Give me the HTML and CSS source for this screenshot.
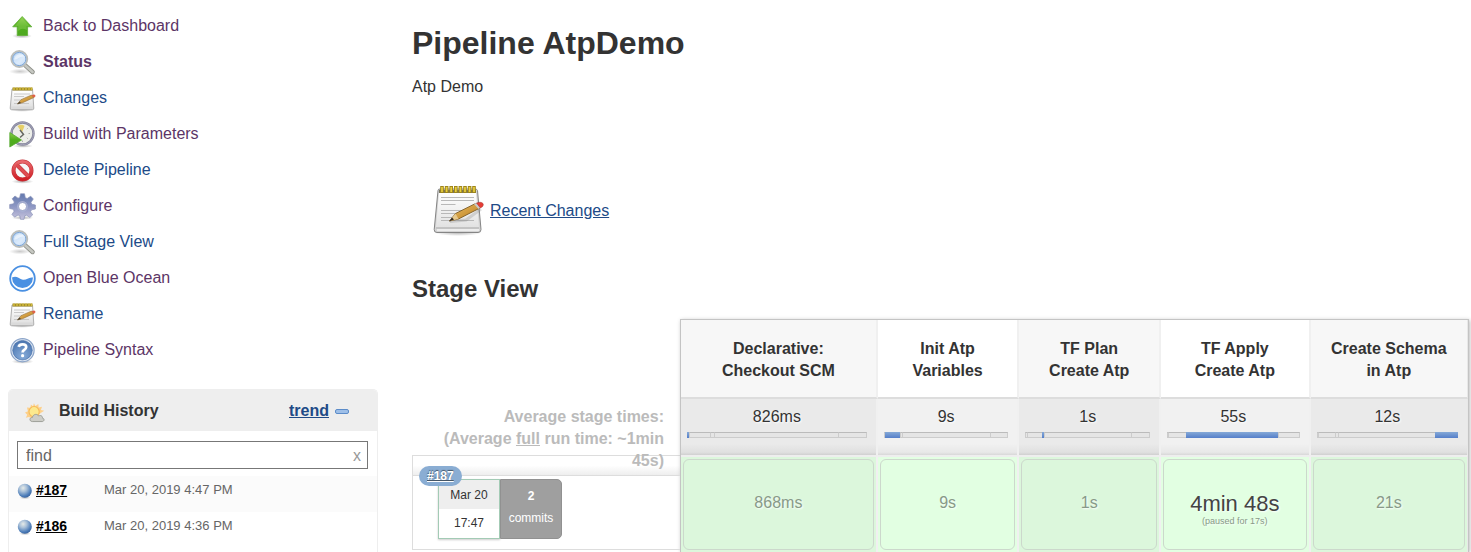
FILE: index.html
```html
<!DOCTYPE html>
<html lang="en">
<head>
<meta charset="utf-8">
<title>AtpDemo [Jenkins]</title>
<link rel="stylesheet" href="styles.css">
</head>
<body>
<svg class="defs" width="0" height="0" aria-hidden="true">
  <defs>
    <linearGradient id="green" x1="0" y1="0" x2="0" y2="1"><stop offset="0" stop-color="#8ccf4c"/><stop offset=".5" stop-color="#4fae1c"/><stop offset="1" stop-color="#4ea820"/></linearGradient>
    <linearGradient id="paper" x1="0" y1="0" x2="0" y2="1"><stop offset="0" stop-color="#ffffff"/><stop offset="1" stop-color="#e2e2e2"/></linearGradient>
    <linearGradient id="gearfill" x1="0" y1="0" x2="0" y2="1"><stop offset="0" stop-color="#6279ae"/><stop offset=".5" stop-color="#8e98c4"/><stop offset="1" stop-color="#c6c2dc"/></linearGradient>
    <linearGradient id="lens" x1="0" y1="0" x2="1" y2="1"><stop offset="0" stop-color="#b5d3f5"/><stop offset=".6" stop-color="#dcebfb"/><stop offset="1" stop-color="#b8d4f4"/></linearGradient>
    <linearGradient id="wood" x1="0" y1="0" x2="1" y2="1"><stop offset="0" stop-color="#ecc16a"/><stop offset="1" stop-color="#b87a18"/></linearGradient>
    <linearGradient id="red" x1="0" y1="0" x2="0" y2="1"><stop offset="0" stop-color="#e8686c"/><stop offset="1" stop-color="#cf1f26"/></linearGradient>
    <radialGradient id="ball" cx=".38" cy=".3" r=".75"><stop offset="0" stop-color="#e6ebe8"/><stop offset=".35" stop-color="#a9c0d8"/><stop offset=".75" stop-color="#4f7fba"/><stop offset="1" stop-color="#345e9a"/></radialGradient>
    <radialGradient id="helpfill" cx=".5" cy=".8" r=".8"><stop offset="0" stop-color="#86abd9"/><stop offset="1" stop-color="#4a74ae"/></radialGradient>
    <radialGradient id="shade"><stop offset="0" stop-color="#000" stop-opacity=".3"/><stop offset="1" stop-color="#000" stop-opacity="0"/></radialGradient>
  </defs>
  <symbol id="up" viewBox="0 0 27 27">
    <ellipse cx="13" cy="23" rx="10" ry="2.5" fill="url(#shade)"/>
    <path d="M13.2 3.5 22.8 13.8H18.6V22.5H8.2V13.8H3.7Z" fill="url(#green)" stroke="#5fae35" stroke-width=".8" stroke-linejoin="round"/>
    <path d="M13.2 5 20.6 13H17.7V17Q13 14 9.2 18V13H5.8Z" fill="#b4e27a" opacity=".3"/>
  </symbol>
  <symbol id="search" viewBox="0 0 27 27">
    <ellipse cx="11" cy="22.5" rx="11" ry="2.8" fill="url(#shade)" opacity=".7"/>
    <path d="m16 16.200 7.600 6.800" stroke="#8f918a" stroke-width="4.400" stroke-linecap="round"/>
    <path d="m16 16.200 7.600 6.800" stroke="#c6c8c2" stroke-width="2.600" stroke-linecap="round"/>
    <circle cx="10.300" cy="10" r="8" fill="url(#lens)" stroke="#bcbebb" stroke-width="1.800"/>
    <circle cx="10.300" cy="10" r="6.600" fill="none" stroke="#7ba4d4" stroke-width="1"/>
    <path d="M5.300 10.700C5.500 5.200 12.500 3.200 15.100 7.600 10.500 7.200 8.500 10.700 5.300 10.700Z" fill="#fff" opacity=".5"/>
  </symbol>
  <symbol id="notepad" viewBox="0 0 52 52">
    <ellipse cx="25" cy="48.5" rx="24" ry="3.5" fill="url(#shade)"/>
    <path d="M5 6.500Q5 5 7 5H42Q44 5 44.500 6.500L48 45.500Q48 48.500 45 48.500H4Q1 48.500 1.200 45.500Z" fill="#d4d4d4" stroke="#858585"/>
    <path d="M6 8H43L46 43H3Z" fill="url(#paper)"/>
    <path d="M3 44H46" stroke="#b2b2b2"/>
    <path d="M4 46H46" stroke="#ededed" stroke-width="2"/>
    <path d="M6 6H43V9H6Z" fill="#77745c"/>
    <path d="M9 2V9M13.600 2V9M18.200 2V9M22.800 2V9M27.400 2V9M32 2V9M36.600 2V9M41 2V9" stroke="#9f861a" stroke-width="3.600"/>
    <path d="M9 3V8M13.600 3V8M18.200 3V8M22.800 3V8M27.400 3V8M32 3V8M36.600 3V8M41 3V8" stroke="#e8ce3e" stroke-width="1.700"/>
    <path d="M8 13.500H41M8 16.500H41M8 20.500H22.500M8 26.500H32M8 29.500H28M8 33.500H20M8 36.500H41" stroke="#b8b8b8" stroke-width="1.200"/>
    <path d="M17 37.500 33 36 48 25" fill="none" stroke="#777" stroke-width="3" opacity=".25"/>
    <path d="M16.500 37 22.500 29.500 42.500 19.500 47 24 25.500 35Z" fill="url(#wood)" stroke="#70501c" stroke-width=".8"/>
    <path d="M16.500 37 22.500 29.500 25.500 35Z" fill="#e6c98d"/><path d="M16 37.500 19 33.500 21 35.500Z" fill="#332b22"/>
    <path d="m41 20 3-1.500 4.500 4.200L45.500 25Z" fill="#c9c9c9"/>
    <path d="M43.500 19 47 18.200Q52 19 49.500 22.600L47.500 24Z" fill="#e63d36" stroke="#a02822" stroke-width=".5"/>
  </symbol>
  <symbol id="notepad-small" viewBox="0 0 27 27">
    <ellipse cx="13" cy="25" rx="12" ry="1.800" fill="url(#shade)"/>
    <path d="M3 4H23.500L24.800 23Q25 24.700 23.500 24.700H2.500Q1 24.700 1.200 23Z" fill="#dadada" stroke="#a2a2a2" stroke-width=".8"/>
    <path d="M3.500 6H23L23.800 21.500H2.300Z" fill="url(#paper)"/>
    <path d="M3.500 2.500H23.500V5.500H3.500Z" fill="#a28d28"/>
    <path d="M5 2.500V5M8 2.500V5M11 2.500V5M14 2.500V5M17 2.500V5M20 2.500V5M22.500 2.500V5" stroke="#d4bd3c" stroke-width="1.400"/>
    <path d="M5 9H21M5 11.500H15M5 15H13M5 18.500H20" stroke="#c4c4c4" stroke-width=".9"/>
    <path d="M8.500 19 12 14.700 22.500 10 25 12.500 13.500 17.700Z" fill="url(#wood)" stroke="#94703c" stroke-width=".6"/>
    <path d="M8 19.200 10.500 16.500 12 18Z" fill="#4d463b"/>
    <path d="M22.500 10.200Q26.500 8.500 26.500 11.200L24.800 12.800Z" fill="#de6048"/>
  </symbol>
  <symbol id="clock" viewBox="0 0 27 27">
    <ellipse cx="14" cy="25" rx="10" ry="1.800" fill="url(#shade)"/>
    <circle cx="13.500" cy="12.500" r="11" fill="#eceee9" stroke="#85859c" stroke-width="2.400"/>
    <circle cx="13.500" cy="12.500" r="11.200" fill="none" stroke="#aaaabe" stroke-width=".8"/>
    <path d="M13 11.500 8.500 5Q13 2.500 15.500 5Z" fill="#e6cf68"/>
    <path d="M11 9 14.500 13.500 11 16.500" fill="none" stroke="#666863" stroke-width="1.500"/>
    <path d="M21 12.500H19.500M13.500 21V19.500M18.800 7.200 17.800 8.200M18.800 17.800 17.800 16.800" stroke="#b0b2ad"/>
    <path d="M.8 11.500 12.500 19 .8 26Z" fill="url(#green)" stroke="#55aa30" stroke-width=".8"/>
  </symbol>
  <symbol id="delete" viewBox="0 0 27 27">
    <ellipse cx="13.500" cy="24.500" rx="11" ry="2.200" fill="url(#shade)"/>
    <circle cx="13.500" cy="13.500" r="9" fill="#f7f7f7" stroke="#c4343a" stroke-width="4"/>
    <path d="m7.500 7.500 12 12" stroke="#c4343a" stroke-width="4"/>
    <circle cx="13.500" cy="13.500" r="9" fill="none" stroke="url(#red)" stroke-width="3"/>
    <path d="m7.500 7.500 12 12" stroke="#df4b50" stroke-width="3"/>
  </symbol>
  <symbol id="gear" viewBox="0 0 27 27">
    <ellipse cx="13.500" cy="24.800" rx="11" ry="2" fill="url(#shade)"/>
    <path fill-rule="evenodd" d="M11.500.8H15.500L16.300 4.700 18.200 5.500 21.700 3.200 24.300 6 22 9.300 22.700 11.200 26.400 12V16L22.500 16.800 21.500 18.700 23.700 21.800 20.800 24.500 17.500 22.200 15.700 22.900 15 26.300H11.500L10.700 22.700 9 22 5.600 24.200 3 21.500 5.100 18.200 4.300 16.300.7 15.500V11.500L4.500 10.800 5.300 9 3.200 5.700 6 3 9 5.200 10.700 4.500ZM13.500 9.500A4 4 0 1 0 13.500 17.500 4 4 0 1 0 13.500 9.500Z" fill="url(#gearfill)" stroke="#8a92b8" stroke-width=".7"/>
    <circle cx="13.500" cy="13.500" r="4.800" fill="none" stroke="#aab2d4" stroke-width="1.200"/>
  </symbol>
  <symbol id="ocean" viewBox="0 0 27 27">
    <circle cx="13.500" cy="13.500" r="12.300" fill="#fff" stroke="#4a90e2" stroke-width="1.800"/>
    <path d="M3 12.600C7 10.200 9.500 13 13 14.500 17 16.200 19.500 11.500 24 12.600A10.500 10.500 0 0 1 3 12.600Z" fill="#4a90e2"/>
  </symbol>
  <symbol id="help" viewBox="0 0 27 27">
    <ellipse cx="13.500" cy="24.500" rx="11" ry="2.300" fill="url(#shade)"/>
    <circle cx="13.500" cy="13.200" r="11.600" fill="#e6edf6" stroke="#8ca5c9" stroke-width="1.200"/>
    <circle cx="13.500" cy="13.200" r="9.800" fill="url(#helpfill)" stroke="#4069a6" stroke-width=".6"/>
    <path d="M9.600 9.800Q10.300 7.300 13.500 7.300 17.200 7.300 17.200 10.100 17.200 11.800 15.100 13 13.600 13.900 13.600 15.500" fill="none" stroke="#fff" stroke-width="2.700"/>
    <circle cx="13.600" cy="18.700" r="1.600" fill="#fff"/>
  </symbol>
  <symbol id="weather" viewBox="0 0 18 18">
    <path d="m8 .3 1.400 2.400L12 1l.3 3 3-.6-1 2.800 3 .8-3.200 2L8 15 3.600 12.500.8 13.300 2 10.500 0 8.500l2.600-1L1.800 4l3 .3.500-3 2 1.700Z" fill="#fdd08a"/>
    <circle cx="8.200" cy="7.800" r="4.600" fill="#fce98d" stroke="#f6ba5a"/>
    <path d="M6.500 16.700C3.500 16.400 4 12.900 6.700 13 7.200 9.700 11.200 9.500 12.300 11.700 14.300 10.500 16 12 15.700 13.600 18 14 17.300 16.700 15.500 16.700Z" fill="#cdcdc7" stroke="#979991" stroke-width=".8"/>
  </symbol>
  <symbol id="ballicon" viewBox="0 0 16 16">
    <ellipse cx="8" cy="14.800" rx="6" ry="1.200" fill="url(#shade)"/><circle cx="7.800" cy="7.800" r="7" fill="url(#ball)"/>
  </symbol>
</svg>

<div class="page">
  <aside class="sidebar">
    <nav class="tasks">
      <a class="task visited" href="#"><svg><use href="#up"/></svg><span>Back to Dashboard</span></a>
      <a class="task visited current" href="#"><svg><use href="#search"/></svg><span>Status</span></a>
      <a class="task" href="#"><svg><use href="#notepad-small"/></svg><span>Changes</span></a>
      <a class="task visited" href="#"><svg><use href="#clock"/></svg><span>Build with Parameters</span></a>
      <a class="task" href="#"><svg><use href="#delete"/></svg><span>Delete Pipeline</span></a>
      <a class="task visited" href="#"><svg><use href="#gear"/></svg><span>Configure</span></a>
      <a class="task" href="#"><svg><use href="#search"/></svg><span>Full Stage View</span></a>
      <a class="task visited" href="#"><svg><use href="#ocean"/></svg><span>Open Blue Ocean</span></a>
      <a class="task" href="#"><svg><use href="#notepad-small"/></svg><span>Rename</span></a>
      <a class="task visited" href="#"><svg><use href="#help"/></svg><span>Pipeline Syntax</span></a>
    </nav>
    <section class="history">
      <header class="history-head">
        <svg class="weather"><use href="#weather"/></svg>
        <h2 class="history-title">Build History</h2>
        <a class="trend" href="#">trend</a>
        <button class="collapse" type="button" aria-label="Collapse"></button>
      </header>
      <div class="find">
        <input class="find-input" type="text" placeholder="find" aria-label="find">
        <button class="find-clear" type="button">x</button>
      </div>
      <div class="build odd"><svg><use href="#ballicon"/></svg><a class="build-no" href="#">#187</a><span class="build-date">Mar 20, 2019 4:47 PM</span></div>
      <div class="build"><svg><use href="#ballicon"/></svg><a class="build-no" href="#">#186</a><span class="build-date">Mar 20, 2019 4:36 PM</span></div>
    </section>
  </aside>

  <main class="main">
    <h1 class="title">Pipeline AtpDemo</h1>
    <p class="description">Atp Demo</p>
    <div class="recent"><svg><use href="#notepad"/></svg><a href="#">Recent Changes</a></div>
    <h2 class="subtitle">Stage View</h2>
    <div class="stage-view">
      <div class="runs">
        <div class="averages">Average stage times:<br>(Average <u>full</u> run time: ~1min 45s)</div>
        <div class="run-gap"></div>
        <div class="run">
          <a class="badge" href="#">#187</a>
          <div class="when"><div class="date">Mar 20</div><div class="time">17:47</div></div>
          <div class="commits"><b>2</b><span>commits</span></div>
        </div>
      </div>
      <table class="stages">
        <colgroup><col class="c1"><col class="c2"><col class="c3"><col class="c4"><col class="c5"></colgroup>
        <thead>
          <tr><th>Declarative:<br>Checkout SCM</th><th>Init Atp<br>Variables</th><th>TF Plan<br>Create Atp</th><th>TF Apply<br>Create Atp</th><th>Create Schema<br>in Atp</th></tr>
        </thead>
        <tbody>
          <tr class="avg">
            <td>826ms<div class="bar"><i class="on" style="width:1%"></i><i style="width:12%"></i><i style="width:2%"></i><i style="width:69%"></i><i style="width:16%"></i></div></td>
            <td>9s<div class="bar"><i style="width:1%"></i><i class="on" style="width:12%"></i><i style="width:2%"></i><i style="width:70%"></i><i style="width:15%"></i></div></td>
            <td>1s<div class="bar"><i style="width:1%"></i><i style="width:12%"></i><i class="on" style="width:2%"></i><i style="width:70%"></i><i style="width:15%"></i></div></td>
            <td>55s<div class="bar"><i style="width:1%"></i><i style="width:13%"></i><i class="on" style="width:70%"></i><i style="width:16%"></i></div></td>
            <td>12s<div class="bar"><i style="width:1%"></i><i style="width:12%"></i><i style="width:2%"></i><i style="width:69%"></i><i class="on" style="width:16%"></i></div></td>
          </tr>
          <tr class="result">
            <td><div class="cell">868ms</div></td>
            <td><div class="cell">9s</div></td>
            <td><div class="cell">1s</div></td>
            <td><div class="cell"><span class="long">4min 48s</span><span class="paused">(paused for 17s)</span></div></td>
            <td><div class="cell">21s</div></td>
          </tr>
        </tbody>
      </table>
    </div>
  </main>
</div>
</body>
</html>
```
FILE: styles.css
```css
* { box-sizing: border-box; }
body { margin: 0; background: #fff; color: #333; font: 16px/22px "Liberation Sans", Arial, Helvetica, sans-serif; }
a { color: #204a87; }
button { padding: 0; border: 0; background: none; font: inherit; }
.defs { position: absolute; }
.page { display: flex; gap: 34px; padding: 0 2px 0 8px; }

.sidebar { display: flex; flex-direction: column; flex: none; width: 370px; }
.tasks { padding-top: 8px; }
.task { display: flex; gap: 7px; height: 36px; padding-left: 1px; text-decoration: none; line-height: 36px; }
.task svg { width: 27px; height: 27px; margin-top: 5px; }
.visited { color: #5c3566; }
.current { font-weight: bold; }

.history { flex: 1; margin-top: 21px; border: 1px solid #eee; border-bottom: 0; border-radius: 5px 5px 0 0; }
.history-head { display: flex; align-items: center; height: 41px; padding: 0 28px 0 16px; background: #eee; border-radius: 4px 4px 0 0; }
.weather { width: 20px; height: 20px; margin-top: 4px; }
.history-title { flex: 1; margin: 0 0 0 14px; font-size: 16px; line-height: 22px; }
.trend { font-weight: bold; }
.collapse { width: 14px; height: 5px; margin: 2px 0 0 6px; border: 1px solid #5c8cc9; border-radius: 2px; background: #9ebfe8; }
.find { display: flex; height: 28px; margin: 10px 9px 7px 8px; border: 1px solid #777; }
.find-input { flex: 1; min-width: 0; padding: 1px 8px 0; border: 0; outline: 0; background: none; color: #666; font: inherit; }
.find-input::placeholder { color: #666; opacity: 1; }
.find-clear { width: 20px; padding-top: 1px; color: #999; }
.build { display: flex; height: 36px; padding: 4px 0 0 8px; color: #666; font-size: 14px; line-height: 20px; }
.build svg { width: 16px; height: 16px; margin-top: 3px; }
.build-no { width: 68px; margin-left: 3px; color: #000; font-weight: bold; }
.build-date { font-size: 13px; }
.odd { background: #fbfbfb; }

.main { flex: 1; min-width: 0; }
.title { margin: 24px 0 0; font-size: 32px; line-height: 38px; }
.description { margin: 14px 0 0; }
.recent { display: flex; align-items: center; gap: 5px; margin: 86px 0 0 21px; }
.recent svg { width: 52px; height: 52px; }
.recent a { padding-top: 2px; }
.subtitle { margin: 39px 0 0; font-size: 24px; line-height: 28px; }

.stage-view { display: flex; align-items: flex-start; margin-top: 16px; }
.runs { flex: none; width: 268px; padding-top: 87px; }
.averages { height: 49px; padding: 0 16px 0 24px; color: #bbb; font-weight: bold; text-align: right; }
.run-gap { height: 20px; border: 1px solid #ddd; border-width: 1px 0 0 1px; background: linear-gradient(transparent 50%, #eee); }
.run { position: relative; display: flex; height: 75px; padding: 3px 0 0 25px; border: 1px solid #ddd; border-right: 0; font-size: 12px; text-align: center; }
.badge { position: absolute; left: 6px; top: -10px; padding: 0 8px; border-radius: 10px; background: #8aadd3; color: #fff; font-weight: bold; line-height: 20px; text-shadow: 0 -1px 1px #456; }
.when { width: 62px; height: 60px; border: 1px solid #a3cbb5; box-shadow: 0 1px 2px #ccc; }
.date { height: 29px; background: #eee; line-height: 30px; }
.time { line-height: 28px; }
.commits { display: flex; flex-direction: column; width: 62px; height: 60px; padding-top: 5px; border: 1px solid #919191; border-radius: 0 5px 5px 0; background: #9f9f9f; color: #fff; }

.stages { flex: 1; width: 0; table-layout: fixed; border-collapse: separate; border-spacing: 0; border: 1px solid #c4c4c4; border-bottom: 0; box-shadow: 1px 1px 4px #bbb; background: #fff; text-align: center; }
.c1 { width: 25%; }
.c2 { width: 18%; }
.c3 { width: 18%; }
.c4 { width: 19%; }
.c5 { width: 20%; }
.stages th, .stages td { padding: 0; border-right: 2px solid #f0f0f0; }
.stages th:last-child, .stages td:last-child { border-right-width: 1px; border-right-color: #e8e8e8; }
.stages th { height: 79px; padding-top: 2px; border-bottom: 2px solid #ddd; }
.stages th:nth-child(odd) { background: #f7f7f7; }
.avg td { height: 56px; padding: 7px 9px 0 6px; vertical-align: top; background: linear-gradient(#f1f1f1 80%, #e8e8e8 95%, #d8d8d8); text-shadow: 1px 1px 2px #fff; }
.avg td:nth-child(odd) { background: linear-gradient(#eaeaea 80%, #e0e0e0 95%, #d0d0d0); }
.bar { display: flex; height: 6px; margin-top: 4px; }
.bar i { border: 1px solid #ccc; border-width: 1px 0 1px 1px; border-top-color: #bbb; background: #e5e5e5; }
.bar i:last-child { border-right-width: 1px; }
.bar .on { border: 0; background: linear-gradient(#85a9d7, #557fca); }
.result td { height: 96px; padding: 2px; background: #e2ffe2; border-top: 2px solid #eee; }
.result td:nth-child(odd) { background: #dcf7dc; }
.cell { display: flex; flex-direction: column; align-items: center; justify-content: center; height: 91px; padding-bottom: 4px; border: 1px solid #ccd8cc; border-radius: 6px; color: #889988; text-shadow: 1px 1px 2px #fff; }
.long { margin-top: 12px; color: #444; font-size: 22px; line-height: 24px; }
.paused { font-size: 9px; line-height: 10px; }
```
